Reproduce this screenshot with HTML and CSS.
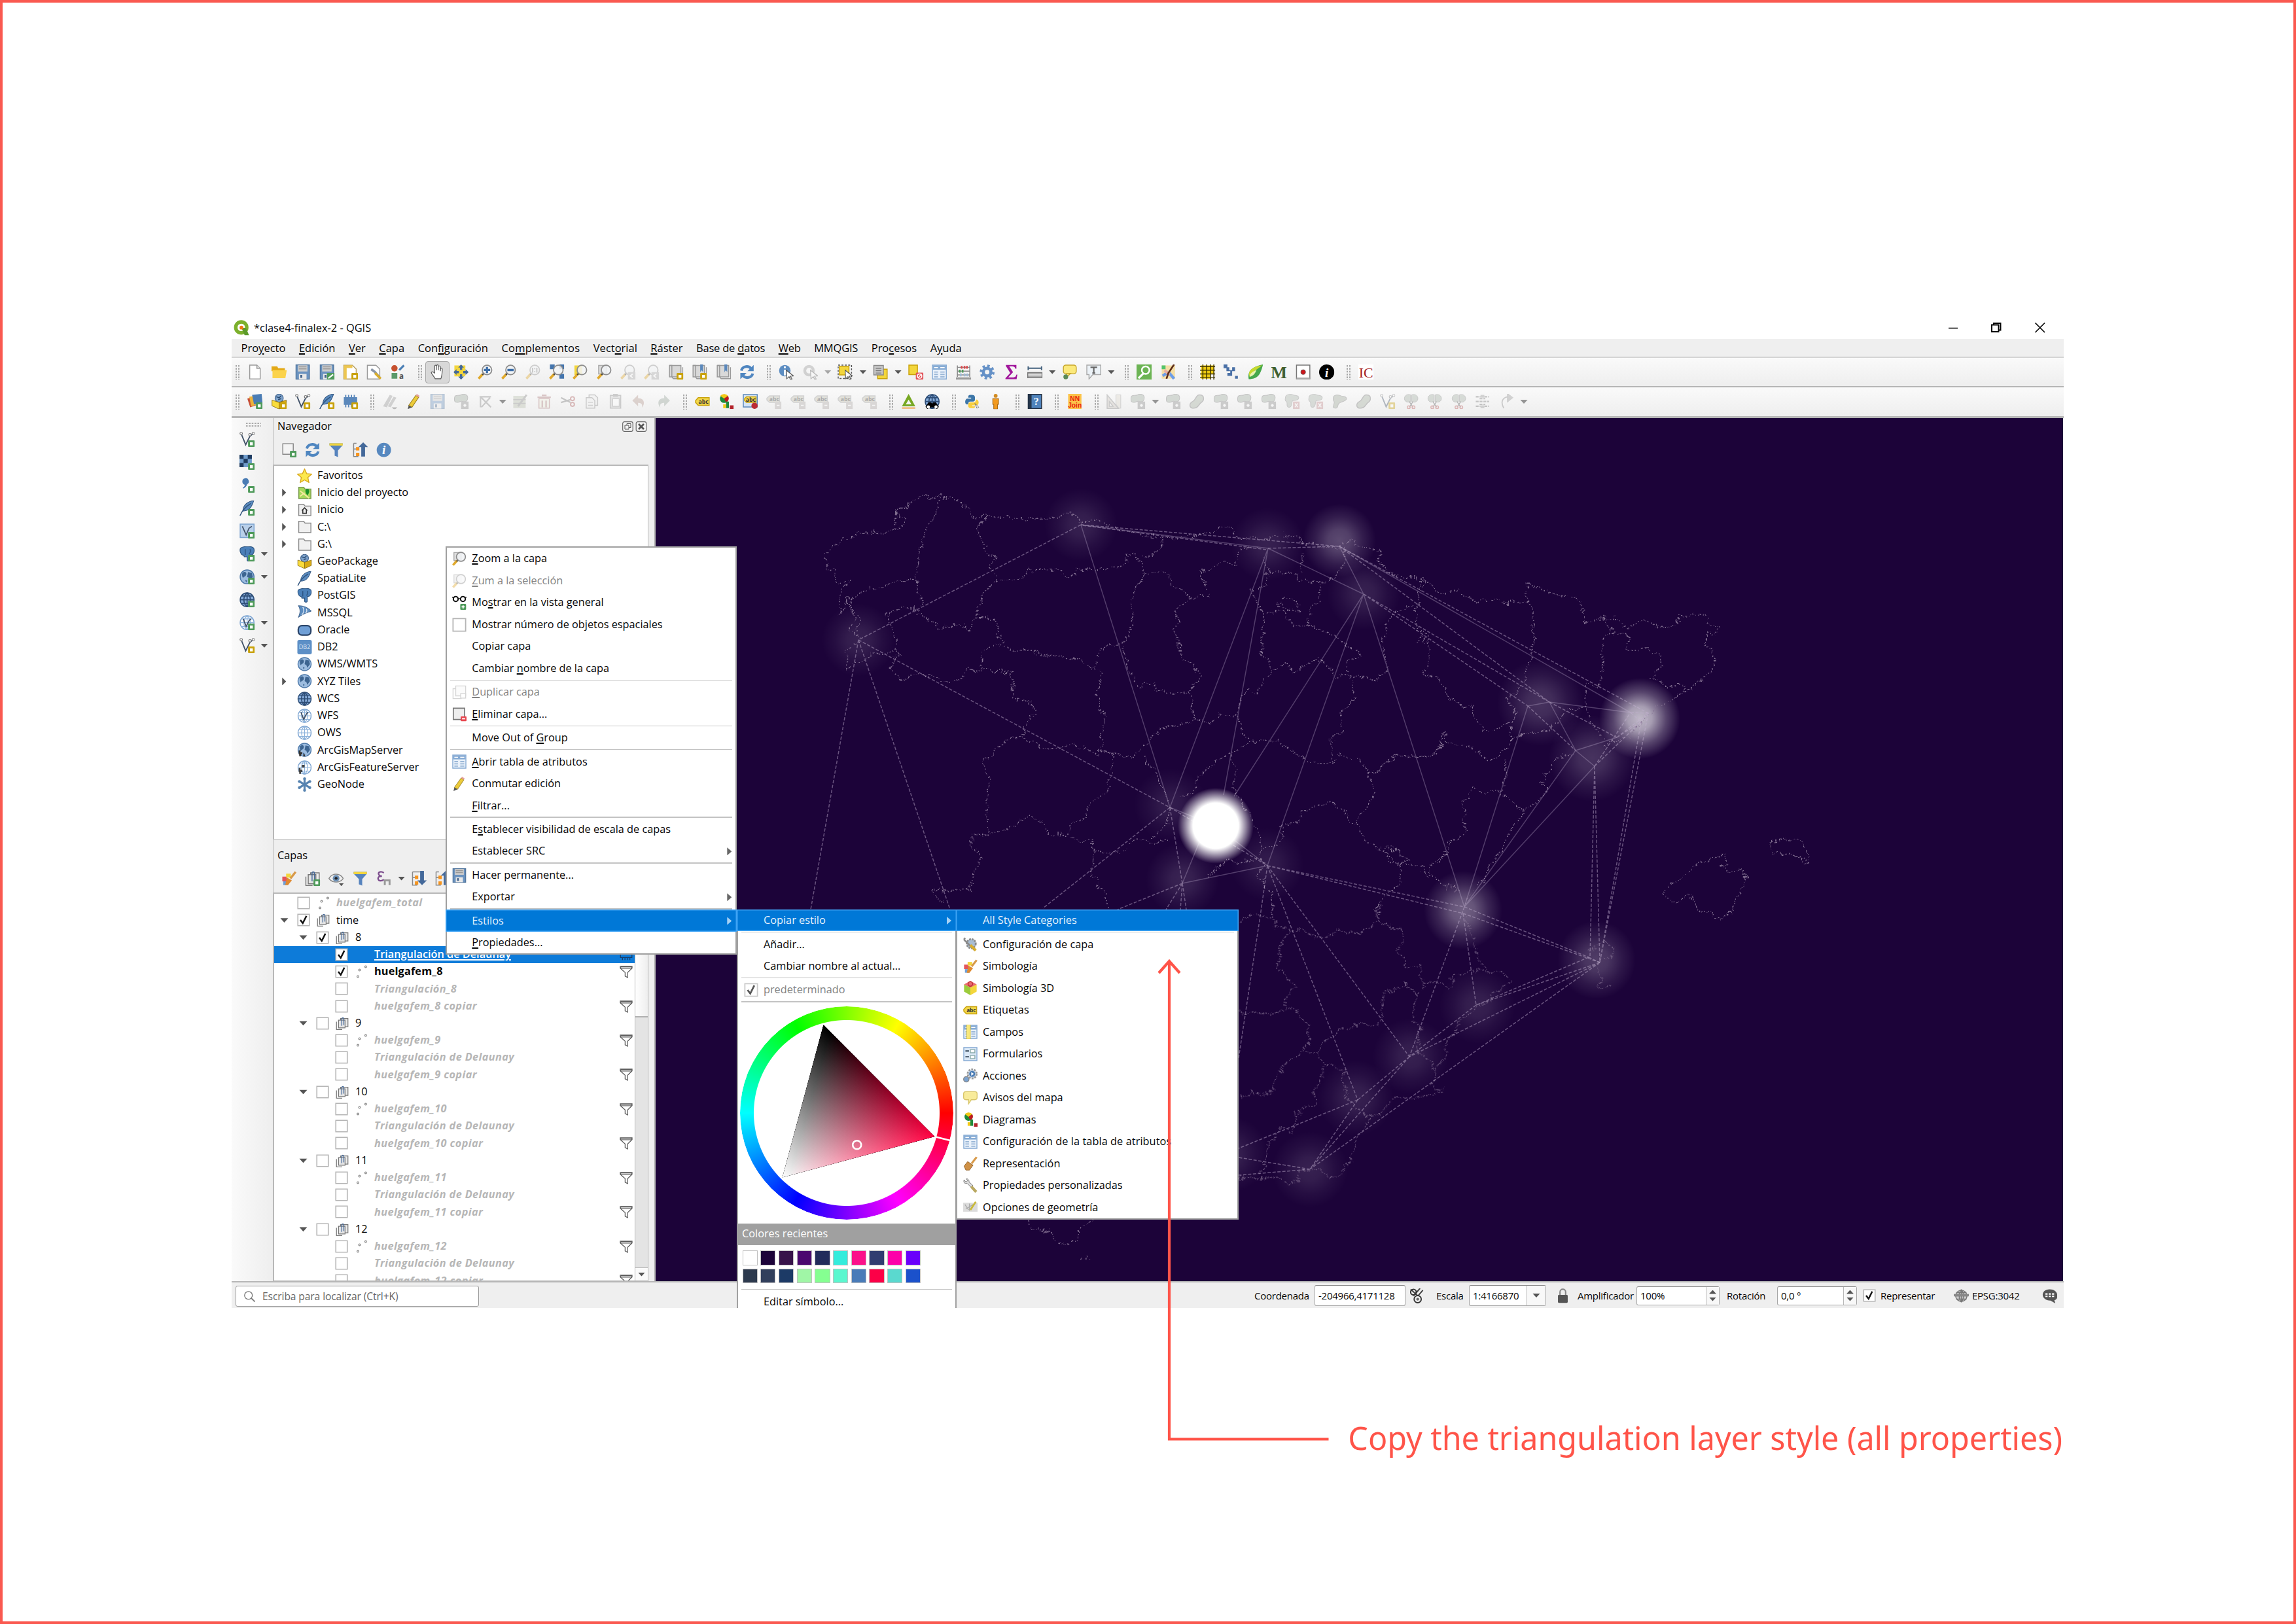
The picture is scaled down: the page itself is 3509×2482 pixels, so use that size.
FILE: index.html
```html
<!DOCTYPE html>
<html lang="es">
<head>
<meta charset="utf-8">
<title>clase4-finalex-2 - QGIS</title>
<link rel="stylesheet" href="styles.css">
</head>
<body>
<svg class="defs" aria-hidden="true">
<defs>
<symbol id="qgis" viewBox="0 0 16 16"><circle cx="7.8" cy="7.6" r="5.6" fill="none" stroke="#7cb02c" stroke-width="3.6"/><path d="M8 8l4.500 0 3.200 7.500-4.500 0z" fill="#5c9a2a"/><circle cx="8" cy="7.800" r="1.900" fill="#ee7913"/></symbol>
<symbol id="plus" viewBox="0 0 16 16"><rect x="9" y="9" width="7" height="7" rx="1" fill="#4e9a5a"/><path d="M11 11h3v3h-3z" fill="#fff"/></symbol>
<symbol id="star" viewBox="0 0 16 16"><rect x="9" y="9" width="7" height="7" rx="1" fill="#c9a20c"/><path d="M11 11h3v3h-3z" fill="#fff"/></symbol>
<symbol id="new" viewBox="0 0 16 16"><path d="M2.500.7h7.500l3.500 3.500v11h-11z" fill="#fff" stroke="#999"/><path d="M10 .7v3.500h3.500" fill="#ddd" stroke="#999"/></symbol>
<symbol id="open" viewBox="0 0 16 16"><path d="M0 2h6l1 2h7v3H0z" fill="#e3a917"/><path d="M1 6h15l-1.500 8.500H1z" fill="#fbd34c"/></symbol>
<symbol id="save" viewBox="0 0 16 16"><path d="M1 .5h14v15H1z" fill="#6b93c0" stroke="#54789f"/><path d="M3 .8h10v6.500H3z" fill="#ccc"/><path d="M4 2.500h8M4 4.700h8" stroke="#999"/><path d="M4 10h8v5.500H4z" fill="#e8e8e8"/><path d="M5.500 11h2v3h-2z" fill="#44648c"/></symbol>
<symbol id="saveas" viewBox="0 0 16 16"><use href="#save"/><path d="M8 9h8v7H8z" fill="#4e9a5a"/><path d="M9.500 14.500l5-4" stroke="#fff" stroke-width="1.500"/></symbol>
<symbol id="layout" viewBox="0 0 16 16"><path d="M1 .8h9l4 4v10.500H1z" fill="#fff" stroke="#b8a060"/><path d="M1 .8h3v14.500H1zM4 .8h6v3H4z" fill="#ecc651"/><use href="#star"/></symbol>
<symbol id="layouts" viewBox="0 0 16 16"><path d="M1 .8h9l4 4v10.500H1z" fill="#fff" stroke="#999"/><path d="M5 5l4 3 5 6" fill="none" stroke="#8a96a8" stroke-width="2.500"/><path d="M9 9l6 6" stroke="#d9ae2e" stroke-width="2.500"/></symbol>
<symbol id="stylemgr" viewBox="0 0 16 16"><circle cx="4" cy="4" r="3.300" fill="#c6512f"/><path d="M1 9h6v6H1z" fill="#5c9a6b"/><path d="M9 6l5-5" stroke="#4b7fb5" stroke-width="2.200"/><text x="9" y="15" class="t-a">a</text></symbol>
<symbol id="hand" viewBox="0 0 16 16"><path d="M5.500 15C4 12 1.500 9.500 1.500 8.500S3.500 7.500 5 9V2c0-1.600 2-1.600 2 0v4-4.500c0-1.500 2-1.300 2 0V6 2.500c0-1.300 2-1.300 2 0V7l.2-2.500c.3-1 1.800-.8 1.800.5 0 4 0 6-1.500 10z" fill="#fff" stroke="#555" stroke-width=".8"/></symbol>
<symbol id="pan" viewBox="0 0 16 16"><path d="M1 1h11.500v11.500H1z" fill="#f3d63c"/><path d="M8 0l3 3.300H9.200v2.400H6.800V3.300H5zM8 16l3-3.300H9.200v-2.400H6.800v2.400H5zM0 8l3.300-3v1.800h2.400v2.400H3.300V11zM16 8l-3.300-3v1.800h-2.400v2.400h2.400V11z" fill="#44699a"/></symbol>
<symbol id="lens" viewBox="0 0 16 16"><path d="M1 15l4.500-5" stroke="#e0a92c" stroke-width="2.600"/><path d="M5 11l2-2.500" stroke="#444" stroke-width="1.600"/><circle cx="9.800" cy="5.800" r="5" fill="#f1f3f6" fill-opacity=".85" stroke="#8c8c8c" stroke-width="1.200"/></symbol>
<symbol id="zin" viewBox="0 0 16 16"><use href="#lens"/><path d="M9.800 2.500v6.600M6.500 5.800h6.600" stroke="#3d6ea8" stroke-width="2.200"/></symbol>
<symbol id="zout" viewBox="0 0 16 16"><use href="#lens"/><path d="M6.500 5.800h6.600" stroke="#3d6ea8" stroke-width="2.400"/></symbol>
<symbol id="zone" viewBox="0 0 16 16"><use href="#lens"/><path d="M7.500 3.500v5M12 3.500v5M9.800 4v1M9.800 7v1" stroke="#777" stroke-width="1.200"/></symbol>
<symbol id="zfull" viewBox="0 0 16 16"><path d="M1 0h5v5H1zM11 0h5v5h-5zM11 10h5v5h-5z" fill="#4475ad"/><use href="#lens"/></symbol>
<symbol id="zsel" viewBox="0 0 16 16"><path d="M2 1h8v10H2z" fill="#f3d63c"/><use href="#lens"/></symbol>
<symbol id="zlay" viewBox="0 0 16 16"><path d="M2 1h8v9H2z" fill="#ddd" stroke="#aaa"/><use href="#lens"/></symbol>
<symbol id="zhist" viewBox="0 0 16 16"><use href="#lens"/><path d="M8 8h8v8H8z" fill="#aaa"/><path d="M13 10l-2.500 2 2.500 2" fill="none" stroke="#fff" stroke-width="1.300"/></symbol>
<symbol id="book" viewBox="0 0 16 16"><path d="M1.500 1h12v12h-12z" fill="#d9d9d9" stroke="#999"/><path d="M1.500 1h2.500v12l1.500 2h10V3" fill="none" stroke="#999"/></symbol>
<symbol id="bookn" viewBox="0 0 16 16"><use href="#book"/><use href="#star"/></symbol>
<symbol id="bookb" viewBox="0 0 16 16"><use href="#book"/><path d="M9 0h3v8l-1.500-2L9 8z" fill="#5b88bb"/></symbol>
<symbol id="bookbn" viewBox="0 0 16 16"><use href="#bookb"/><use href="#star"/></symbol>
<symbol id="refresh" viewBox="0 0 16 16"><path d="M2 6.500C3 2 9 .8 12 4M14 9.500C13 14 7 15.200 4 12" fill="none" stroke="#4f86c0" stroke-width="2.800"/><path d="M15 .5v6.500H8.500zM1 15.500V9h6.500z" fill="#4f86c0"/></symbol>
<symbol id="cursor" viewBox="0 0 16 16"><path d="M8 6l7.500 6-3.300.3 1.800 3-1.400.6-1.700-3L8.500 15z" fill="#fff" stroke="#555" stroke-width=".8"/></symbol>
<symbol id="ident" viewBox="0 0 16 16"><circle cx="6.500" cy="6.500" r="6" fill="#5c8dc2"/><path d="M6.500 2v2M6.500 5.500v6" stroke="#fff" stroke-width="2"/><use href="#cursor"/></symbol>
<symbol id="gear" viewBox="0 0 16 16"><circle cx="8" cy="8" r="6.300" fill="none" stroke="#6591c7" stroke-width="3" stroke-dasharray="2.470 2.470"/><circle cx="8" cy="8" r="4" fill="none" stroke="#6591c7" stroke-width="3.200"/></symbol>
<symbol id="act" viewBox="0 0 16 16"><circle cx="6.500" cy="6.500" r="4.500" fill="none" stroke="#999" stroke-width="3"/><use href="#cursor"/></symbol>
<symbol id="sel" viewBox="0 0 16 16"><path d="M.7.700h14v14H.7z" fill="none" stroke="#555" stroke-dasharray="2 1.500"/><path d="M2 2h10v9H2z" fill="#f3d63c" stroke="#c9a20c"/><use href="#cursor"/></symbol>
<symbol id="selv" viewBox="0 0 16 16"><path d="M5 5h10v10H5z" fill="#f3d63c" stroke="#c9a20c"/><path d="M1 1h10v10H1z" fill="#c9c9c9" stroke="#888"/><path d="M3 4h6M3 6.500h6M3 9h6" stroke="#777"/></symbol>
<symbol id="desel" viewBox="0 0 16 16"><path d="M.7.700h9v10h-9z" fill="#f3d63c" stroke="#c9a20c"/><rect x="8" y="8.500" width="8" height="7.500" rx="1" fill="#e2555b"/><circle cx="12" cy="12.200" r="2.300" fill="none" stroke="#fff"/><path d="M10.500 14l3-3.500" stroke="#fff"/></symbol>
<symbol id="table" viewBox="0 0 16 16"><path d="M.7.700h14.600v14.600H.7z" fill="#e9f1fa" stroke="#86abd4"/><path d="M1 1h14v4.500H1z" fill="#86abd4"/><path d="M2.500 3.200h4M9 3.200h4.500M2.500 8h4M9 8h4.500M2.500 10.500h4M9 10.500h4.500M2.500 13h4M9 13h4.500" stroke="#9ab6d6" stroke-width="1.300"/><path d="M2.500 3.200h4M9 3.200h4.500" stroke="#fff"/></symbol>
<symbol id="abacus" viewBox="0 0 16 16"><path d="M1.500 1v12M14.500 1v12M1 3h14M1 7h14M1 11h14" stroke="#888" fill="none"/><path d="M0 13.500h16V16H0z" fill="#999"/><path d="M6 1.500v3M9 1.500v3M11.500 1.500v3" stroke="#d8474a" stroke-width="1.800"/><path d="M4 5.500v3M7 5.500v3" stroke="#4e9a5a" stroke-width="1.800"/><path d="M5 9.500v3M9 9.500v3M12 9.500v3" stroke="#9fb9d6" stroke-width="1.800"/></symbol>
<symbol id="sigma" viewBox="0 0 16 16"><path d="M3 .5h11v4h-1.200c-.4-2-1.300-2.500-3-2.500H6.500L10.500 8l-5 5.500H11c1.800 0 2.400-.8 3-2.800h1l-.8 4.800H2.500v-1L7.500 9 3 1.800z" fill="#a2189c"/></symbol>
<symbol id="measure" viewBox="0 0 16 16"><path d="M1 4h14M1 2v4M15 2v4" stroke="#46637f" stroke-width="1.400"/><path d="M.5 8.500h15V14H.5z" fill="#aaa" stroke="#777"/><path d="M1 11h14" stroke="#eee"/></symbol>
<symbol id="tip" viewBox="0 0 16 16"><rect x="1.500" y=".7" width="13.500" height="9" rx="2.500" fill="#fbe97b" stroke="#c7a72c"/><path d="M5 9.500l-1 5 5-5z" fill="#fbe97b" stroke="#c7a72c"/><circle cx="4" cy="13" r="2.500" fill="#5c8a58"/></symbol>
<symbol id="note" viewBox="0 0 16 16"><path d="M.7.700h14.600v10H7l-4 4.500V10.700H.7z" fill="#ecf2f7" stroke="#aaa"/><path d="M4.500 3h7M8 3v6M6.500 9h3" stroke="#666" stroke-width="1.500"/></symbol>
<symbol id="gsearch" viewBox="0 0 16 16"><path d="M0 0h16v16H0z" fill="#6cb454"/><circle cx="9.500" cy="6" r="4" fill="none" stroke="#fff" stroke-width="1.700"/><path d="M2 14.500L7 9.500" stroke="#fff" stroke-width="2.200"/></symbol>
<symbol id="osm" viewBox="0 0 16 16"><path d="M1 1h14v14H1z" fill="#f6dfa6"/><path d="M1 1h4v4H1z" fill="#53c46c"/><path d="M9 9l5 6M2 12l6-4" stroke="#6c9de8" stroke-width="3"/><path d="M4 6l5 5" stroke="#eab0a0" stroke-width="3"/><path d="M14 0L8 9l-2 6" stroke="#5b2b18" stroke-width="1.800" fill="none"/></symbol>
<symbol id="grid" viewBox="0 0 16 16"><path d="M1 1h14v9h-4v5H1z" fill="#eecb11"/><path d="M3 0v16M7 0v16M11 0v16M14.500 0v16M0 2h16M0 6h16M0 10h16M0 14h16" stroke="#3c3200" stroke-width="1"/></symbol>
<symbol id="ytool" viewBox="0 0 16 16"><path d="M0 0h4v3h2v3h3V3h3v4H9v5H4V9h3V7H3V4H0zM12 12h3v3h-3z" fill="#4a70a6"/></symbol>
<symbol id="leaf" viewBox="0 0 16 16"><path d="M16 0C13 12 10 15 1 15.500-1 6 6 2 16 0z" fill="#46a84c"/><path d="M15 .8C9 6 4 8 2 13-1 6 6 2 15 .8z" fill="#c8d92f"/><path d="M2 13c0-4 4-6 7-7-1 3-3 6-7 7z" fill="#e8f3b0"/></symbol>
<symbol id="mletter" viewBox="0 0 16 16"><text x="8" y="14.500" class="t-m">M</text></symbol>
<symbol id="dotbox" viewBox="0 0 16 16"><path d="M1 .7h14v14.500H1z" fill="#fff" stroke="#777"/><path d="M1 14.800h14" stroke="#aaa" stroke-width="2"/><circle cx="8" cy="8" r="2.500" fill="#d0161c" stroke="#555" stroke-width=".6"/></symbol>
<symbol id="iblack" viewBox="0 0 16 16"><circle cx="8" cy="8" r="8" fill="#000"/><text x="8" y="13" class="t-i">i</text></symbol>
<symbol id="ic" viewBox="0 0 16 16"><path d="M0 0h16v16H0z" fill="#fff"/><text x="8" y="13.500" class="t-ic">IC</text></symbol>
<symbol id="dsm" viewBox="0 0 16 16"><path d="M0 5l6-2 3 9-6 2z" fill="#c74f36"/><path d="M2 3l7-1 2 9-7 2z" fill="#edb23c"/><path d="M5 1l10-1 1 10-9 1z" fill="#4a7cb4"/><use href="#plus"/></symbol>
<symbol id="gpkg" viewBox="0 0 16 16"><circle cx="8" cy="4.500" r="4.300" fill="#7fa3cb" stroke="#40628c" stroke-width=".8"/><path d="M5 3l3 1 2-2M7 6l3-1" stroke="#27476e" fill="none"/><path d="M.5 6.500L8 9v7L.5 12.500z" fill="#f9dc3c" stroke="#8a6d10" stroke-width=".6"/><path d="M15.500 6.500L8 9v7l7.500-3.500z" fill="#d8ab14" stroke="#8a6d10" stroke-width=".6"/></symbol>
<symbol id="gpkgn" viewBox="0 0 16 16"><use href="#gpkg"/><use href="#star"/></symbol>
<symbol id="vec" viewBox="0 0 16 16"><path d="M2 2.500l4.500 11 4.500-9L14 2" fill="none" stroke="#44546a" stroke-width="1.300"/><g fill="#fff" stroke="#777" stroke-width=".8"><circle cx="1.800" cy="1.800" r="1.300"/><circle cx="11" cy="3" r="1.300"/><circle cx="14.500" cy="1.800" r="1.300"/></g></symbol>
<symbol id="vecn" viewBox="0 0 16 16"><use href="#vec"/><use href="#star"/></symbol>
<symbol id="vecp" viewBox="0 0 16 16"><use href="#vec"/><use href="#plus"/></symbol>
<symbol id="feather" viewBox="0 0 16 16"><path d="M15 0C8 1 4 5 3.500 11c6 0 9-3 11.500-11z" fill="#5b8cc0" stroke="#31547e" stroke-width=".7"/><path d="M.5 16C3 10 7 6 12 3" fill="none" stroke="#31547e" stroke-width="1.100"/></symbol>
<symbol id="feathern" viewBox="0 0 16 16"><use href="#feather"/><use href="#star"/></symbol>
<symbol id="featherp" viewBox="0 0 16 16"><use href="#feather"/><use href="#plus"/></symbol>
<symbol id="chip" viewBox="0 0 16 16"><path d="M1 3.500h14v8H1z" fill="#5b88bb"/><path d="M3 1v13M6 1v13M9 1v13M12 1v13" stroke="#5b88bb" stroke-width="1.300"/></symbol>
<symbol id="chipn" viewBox="0 0 16 16"><use href="#chip"/><use href="#star"/></symbol>
<symbol id="pencil" viewBox="0 0 16 16"><path d="M2.500 12L10 1.500l3 2L6 14z" fill="#eccb3a" stroke="#9b8120" stroke-width=".7"/><path d="M10 1.500l1-1.500 3 2-1 1.500z" fill="#e6a0a0"/><path d="M2.500 12L1.500 16 6 14z" fill="#555"/></symbol>
<symbol id="pencils" viewBox="0 0 16 16"><path d="M1 13L8 1l3 1L5 14zM6 13l6-10 3 1-6 10z" fill="#999"/><path d="M10 14h6l-3 3z" fill="#666"/></symbol>
<symbol id="blob" viewBox="0 0 16 16"><path d="M1 5c0-5 4-2.500 7-4s7-.5 7 3-2 5-5 4-3 1-6 1-3-2-3-4z" fill="#9fac9f" stroke="#777" stroke-width=".7"/></symbol>
<symbol id="bsq" viewBox="0 0 16 16"><use href="#blob"/><path d="M8 8h8v8H8z" fill="#8d8d8d"/><path d="M10.500 12h3M12 10.500v3" stroke="#fff" stroke-width="1.500"/></symbol>
<symbol id="bred" viewBox="0 0 16 16"><path d="M1 4c0-4 6-4 8-3s6 0 6 3-4 3-6 3 0 7-4 7-1-5-3-6-1-2-1-4z" fill="#aab4aa" stroke="#888" stroke-width=".7"/><path d="M9 8h7v8H9z" fill="#c58f92"/><path d="M11 10l3 4M14 10l-3 4" stroke="#fff"/></symbol>
<symbol id="breshape" viewBox="0 0 16 16"><path d="M1 5c0-5 6-4 8-3s6 0 6 3-6 3-8 5 0 5-4 5 0-5-1-7-1-1-1-3z" fill="#9fa99a" stroke="#777" stroke-width=".7"/></symbol>
<symbol id="bcurve" viewBox="0 0 16 16"><path d="M11 1c6 0 5 6 2 8s-3 6-8 6-5-5-1-7 3-7 7-7z" fill="#a5b0a0" stroke="#777"/></symbol>
<symbol id="bcut" viewBox="0 0 16 16"><path d="M7.500 1v7C3 10 .5 7 1 4s4-4 6.500-3zM8.500 1v7c4.500 2 7-1 6.500-4s-4-4-6.500-3z" fill="#a5b0a5" stroke="#777" stroke-width=".6"/><path d="M6 14l4-6M10 14L6 8" stroke="#555"/><circle cx="5.500" cy="14" r="1.500" fill="none" stroke="#b55"/><circle cx="10.500" cy="14" r="1.500" fill="none" stroke="#b55"/></symbol>
<symbol id="hlines" viewBox="0 0 16 16"><path d="M1 3h5M10 3h5M1 8h14M1 13h5M10 13h5M5 5h6M5 11h6" stroke="#777" stroke-width="1.500" stroke-dasharray="3 1"/><path d="M6 1h4v3H6zM6 12h4v3H6z" fill="#999"/></symbol>
<symbol id="rot" viewBox="0 0 16 16"><path d="M11 3C4 3 1 8 5 15M9 0l5 4-5 4z" fill="none" stroke="#888" stroke-width="1.200"/><path d="M9 0l6 4-6 4z" fill="#999"/></symbol>
<symbol id="vtool" viewBox="0 0 16 16"><path d="M2 3h12M3 3v11M3 3l11 11M13 4L4 14" stroke="#888" stroke-width="1.500" fill="none"/></symbol>
<symbol id="multi" viewBox="0 0 16 16"><path d="M1 2h13v13H1z" fill="#b9c0ae"/><path d="M1 6h13M1 10h13" stroke="#888"/><path d="M6 13l9-12" stroke="#888" stroke-width="2"/></symbol>
<symbol id="trash" viewBox="0 0 16 16"><path d="M2.500 5h11v10h-11z" fill="#eed" stroke="#a77"/><path d="M1 3.500h14M5.500 1.500h5M6 7v7M10 7v7" stroke="#a77" stroke-width="1.500"/></symbol>
<symbol id="cut" viewBox="0 0 16 16"><path d="M1 4l10 5M1 9l10-3" stroke="#777" stroke-width="1.500"/><circle cx="13" cy="5" r="2" fill="none" stroke="#a55" stroke-width="1.300"/><circle cx="13" cy="11" r="2" fill="none" stroke="#a55" stroke-width="1.300"/></symbol>
<symbol id="copy" viewBox="0 0 16 16"><path d="M5 1h6l3 3v8H5z" fill="#eee" stroke="#888"/><path d="M2 4h6l3 3v8H2z" fill="#eee" stroke="#888"/><path d="M4 9h5M4 12h5" stroke="#999"/></symbol>
<symbol id="paste" viewBox="0 0 16 16"><path d="M2.500 1.500h11v13.500h-11z" fill="#ccc" stroke="#888"/><path d="M5 5h7v8H5z" fill="#fff" stroke="#999"/><path d="M5.500 0h5v3h-5z" fill="#888"/></symbol>
<symbol id="undo" viewBox="0 0 16 16"><path d="M7 1v3.500c6 0 8 5 4 10 1-4-1-5-4-5V13L1 7z" fill="#b59a90"/></symbol>
<symbol id="redo" viewBox="0 0 16 16"><path d="M9 1v3.500c-6 0-8 5-4 10-1-4 1-5 4-5V13l6-6z" fill="#98a59b"/></symbol>
<symbol id="abc" viewBox="0 0 16 16"><path d="M3.500 4H15v8H3.500L.7 9V7z" fill="#f2d84a" stroke="#c9a20c"/><text x="9" y="10.500" class="t-abc">abc</text></symbol>
<symbol id="abcd" viewBox="0 0 16 16"><path d="M3.500 2H14v7H3.500L.7 6.500v-2z" fill="#c4c2b0" stroke="#999"/><text x="8.500" y="7.800" class="t-abc">abc</text><path d="M9 8h7v8H9z" fill="#b0aaa8"/><path d="M11 12h3" stroke="#fff"/></symbol>
<symbol id="abcp" viewBox="0 0 16 16"><path d="M.7.700h14.600v13H.7z" fill="#d4e4f5" stroke="#5b88bb"/><path d="M4 3h10v6H4L2 7V5z" fill="#f2d84a" stroke="#c9a20c"/><text x="8.500" y="8" class="t-abc">abc</text><circle cx="12.500" cy="12.500" r="3.300" fill="#bb2b33"/></symbol>
<symbol id="diag" viewBox="0 0 16 16"><circle cx="6" cy="5" r="4.500" fill="#1f8a3c"/><path d="M6 5L2 2C4-.5 8-.5 10 2z" fill="#f3c916"/><path d="M6 5l4-3c2 3 0 6-2 7z" fill="#c0181e"/><path d="M8 8h3v7H8z" fill="#1f8a3c"/><path d="M12 12h4v4h-4z" fill="#b3232a"/><path d="M5 11h3v4H5z" fill="#f3c916"/></symbol>
<symbol id="tri" viewBox="0 0 16 16"><path d="M8 0l7 13H1zM8 6l-3 5h6z" fill="#77a823" fill-rule="evenodd"/><path d="M1 14h14v1.700H1z" fill="#f0b06a"/></symbol>
<symbol id="globe" viewBox="0 0 16 16"><circle cx="8" cy="8" r="7.300" fill="#9dbde0" stroke="#4b77a8"/><path d="M3 4c3-3 5 0 4 2s-3 2-3 3-2-2-1-5zM9 3l4 1 1 4-3 4-1-3-2-1zM6 11l2 1-1 2z" fill="#3d6591"/></symbol>
<symbol id="globep" viewBox="0 0 16 16"><use href="#globe"/><use href="#plus"/></symbol>
<symbol id="gdark" viewBox="0 0 16 16"><circle cx="8" cy="8" r="7.300" fill="#88addb" stroke="#2d4d76"/><path d="M8 .7v14.600M.7 8h14.600M2 4h12M2 12h12M8 .7C3.500 4 3.500 12 8 15.300M8 .7c4.500 3.300 4.500 11.300 0 14.600" fill="none" stroke="#2d4d76" stroke-width="1.200"/></symbol>
<symbol id="gdarkp" viewBox="0 0 16 16"><use href="#gdark"/><use href="#plus"/></symbol>
<symbol id="glight" viewBox="0 0 16 16"><circle cx="8" cy="8" r="7.300" fill="#fff" stroke="#7ba3d0"/><path d="M8 .7v14.600M.7 8h14.600M2 4h12M2 12h12M8 .7C3.500 4 3.500 12 8 15.300M8 .7c4.500 3.300 4.500 11.300 0 14.600" fill="none" stroke="#8db3dc" stroke-width=".9"/></symbol>
<symbol id="gv" viewBox="0 0 16 16"><use href="#glight"/><path d="M4 4l3 8 3-6 2-2" fill="none" stroke="#44546a" stroke-width="1.300"/></symbol>
<symbol id="gvp" viewBox="0 0 16 16"><use href="#gv"/><use href="#plus"/></symbol>
<symbol id="garc" viewBox="0 0 16 16"><use href="#globe"/><path d="M1.500 8.500h2v2h2v2.500H4V15H2v-2h-.5zM6.500 13h2v2h-2z" fill="#333"/></symbol>
<symbol id="garcf" viewBox="0 0 16 16"><use href="#glight"/><path d="M1.500 8.500h2v2h2v2.500H4V15H2v-2h-.5zM5 5h3v3H5z" fill="#444"/></symbol>
<symbol id="metas" viewBox="0 0 16 16"><use href="#gdark"/><path d="M4 9h3l1 1.500L9 9h3l3 4.500-2 2.500-4-2H7l-4 2-2-2.500z" fill="#000"/><circle cx="4" cy="13.800" r="1.700" fill="#fff"/><circle cx="12" cy="13.800" r="1.700" fill="#fff"/></symbol>
<symbol id="python" viewBox="0 0 16 16"><path d="M7 1c3 0 4 .5 4 3v2c0 1.500-1 2-2 2H6c-1.500 0-2 1-2 3H2C0 10 .5 5 3 5h4V4H4c0-2 0-3 3-3z" fill="#3d76a8"/><path d="M8 15c-3 0-4-.5-4-3s1-3 2-3h3c2 0 3-1 3-3h1c3 1 2 6 0 6H8v1h3c0 2-1 2-3 2z" fill="#f8cf3f"/><path d="M11 10l4 4-2 1z" fill="#fff" stroke="#666" stroke-width=".6"/></symbol>
<symbol id="man" viewBox="0 0 16 16"><circle cx="8" cy="2" r="2" fill="#d38c22"/><path d="M5 5h6v6h-1v5H6v-5H5z" fill="#f29a1f" stroke="#a5650f" stroke-width=".7"/></symbol>
<symbol id="help" viewBox="0 0 16 16"><path d="M1 .5h14v15H1z" fill="#4f83bb" stroke="#222f40"/><path d="M1 .5h3.500v15H1z" fill="#26374c"/><text x="9.500" y="12" class="t-q">?</text></symbol>
<symbol id="nn" viewBox="0 0 16 16"><path d="M1 0h14v16H1z" fill="#fcc44a"/><text x="8" y="7.300" class="t-nn">NN</text><text x="8" y="14.300" class="t-nn">Join</text></symbol>
<symbol id="setsq" viewBox="0 0 16 16"><path d="M.7 1v14.300h12zM3 8v5h4z" fill="#cfc8c0" stroke="#888" fill-rule="evenodd"/><path d="M10 1h5v14h-2L10 11z" fill="#ddd8cc" stroke="#999" stroke-width=".7"/></symbol>
<symbol id="raster" viewBox="0 0 16 16"><path d="M0 0h13v13H0z" fill="#6f9ccc"/><path d="M0 0h4.300v4.300H0zM8.700 0H13v4.300H8.700zM4.300 4.300h4.400v4.400H4.300zM0 8.700h4.300V13H0z" fill="#1e3a5e"/><use href="#plus"/></symbol>
<symbol id="comma" viewBox="0 0 16 16"><path d="M3 4a3.400 3.400 0 1 1 5 3c-.5 2-2 3.500-4 4.500l-.5-1C5 9.500 5.500 8.500 5.600 7.500 4 7.300 3 6 3 4z" fill="#4a7cb4"/><use href="#plus"/></symbol>
<symbol id="virt" viewBox="0 0 16 16"><path d="M.7.700h14.600v14H.7z" fill="#b9d0ea" stroke="#7ba3d0"/><path d="M3 3l4 9 3-7 3-2" fill="none" stroke="#44546a" stroke-width="1.200"/><use href="#plus"/></symbol>
<symbol id="eleph" viewBox="0 0 16 16"><path d="M1 2c2-2 12-3 14 0 1 3 0 6-2 7h-2v5c0 2-3 2-3 0v-3H5c0-2-1-2-2-2C1 8 0 4 1 2z" fill="#4a7fb8" stroke="#2c5480" stroke-width=".8"/><path d="M6 3v6M11 3c1 2 0 4-1 5" stroke="#2c5480" fill="none"/></symbol>
<symbol id="elephp" viewBox="0 0 16 16"><use href="#eleph"/><use href="#plus"/></symbol>
<symbol id="addlay" viewBox="0 0 16 16"><path d="M1.500 1.500h11v11h-11z" fill="#f4f4f4" stroke="#888"/><use href="#plus"/></symbol>
<symbol id="funnel" viewBox="0 0 16 16"><path d="M1 1h14v2L10 8.500V15.500L6.500 14V8.500L1 3z" fill="#5683bd"/><path d="M1 1h14v2.500H1z" fill="#f3d63c"/></symbol>
<symbol id="collapse" viewBox="0 0 16 16"><path d="M1 1h3M1 1v14h5M1 7h3" stroke="#888" fill="none"/><path d="M3.500 5h3.500v3.500H3.500zM3.500 11h3.500v3.500H3.500z" fill="#f7941d"/><path d="M11 0l5 5h-3v10H9V5H6z" fill="#44699a"/></symbol>
<symbol id="expand" viewBox="0 0 16 16"><path d="M1 1h8M1 1v14h5M1 7h3" stroke="#888" fill="none"/><path d="M3.500 5h3.500v3.500H3.500zM3.500 11h3.500v3.500H3.500z" fill="#f7941d"/><path d="M11 15l5-5h-3V0H9v10H6z" fill="#44699a"/></symbol>
<symbol id="info" viewBox="0 0 16 16"><circle cx="8" cy="8" r="7.500" fill="#5788bf"/><text x="8" y="12.700" class="t-i">i</text></symbol>
<symbol id="fav" viewBox="0 0 16 16"><path d="M8 .5l2.300 5.200 5.500.6-4.200 3.700 1.200 5.500L8 12.700l-4.800 2.800 1.200-5.500L.2 6.300l5.500-.6z" fill="#fce94f" stroke="#d8a81c"/></symbol>
<symbol id="folder" viewBox="0 0 16 16"><path d="M1.500 2h5.500l1.500 2H15v10.500H1.500z" fill="#f0f0f0" stroke="#8a8a8a"/></symbol>
<symbol id="home" viewBox="0 0 16 16"><use href="#folder"/><path d="M5 9l3-3 3 3M6 8.500V12h4V8.500" fill="none" stroke="#333" stroke-width="1.200"/></symbol>
<symbol id="phome" viewBox="0 0 16 16"><path d="M1.500 2h5.500l1.500 2H15v10.500H1.500z" fill="#a6d95b" stroke="#7a9a50"/><path d="M3 6l5 4 5 4M3 12l5-4" stroke="#f5e9a0" stroke-width="1.500"/><path d="M10 4c4-1 4 4 1 7-2-3-3-6-1-7z" fill="#1a8f2a"/></symbol>
<symbol id="mssql" viewBox="0 0 16 16"><path d="M1 .5c6 0 11 2 14.500 6C12 8 7 9 1 13.500 3 9 4 5 1 .5z" fill="#5b8cc0" stroke="#31547e" stroke-width=".6"/><path d="M6 2c2 3 1 6-1 9M10 4c1 2 0 4-1 5" stroke="#dfe9f5" fill="none"/></symbol>
<symbol id="oracle" viewBox="0 0 16 16"><rect x="1" y="3" width="14" height="10.500" rx="4" fill="#6f9fd6" stroke="#2b456a" stroke-width="1.600"/></symbol>
<symbol id="db2" viewBox="0 0 16 16"><rect width="16" height="16" rx="2" fill="#5d8fc6"/><text x="8" y="10" class="t-db">DB2</text></symbol>
<symbol id="gnode" viewBox="0 0 16 16"><path d="M8 1v14M2 4.500l12 7M14 4.500l-12 7" stroke="#5683b0" stroke-width="2.300"/><g fill="#5683b0"><circle cx="8" cy="1.600" r="1.600"/><circle cx="8" cy="14.400" r="1.600"/><circle cx="2.200" cy="4.600" r="1.600"/><circle cx="13.800" cy="11.400" r="1.600"/><circle cx="13.800" cy="4.600" r="1.600"/><circle cx="2.200" cy="11.400" r="1.600"/></g></symbol>
<symbol id="brush" viewBox="0 0 16 16"><path d="M9.500 8L15 1" stroke="#d89a4a" stroke-width="2.300"/><path d="M5 6l6 4-4 5.500H3L1 11z" fill="#cf9146" stroke="#8b5a1f" stroke-width=".6"/></symbol>
<symbol id="sym" viewBox="0 0 16 16"><path d="M1 6h5v5H1z" fill="#e2555b"/><path d="M5 3h5v4H5z" fill="#f3d63c"/><path d="M2 11h5v4H2z" fill="#6f9fd6"/><path d="M9.500 8L15 1" stroke="#d89a4a" stroke-width="2.300"/><path d="M6 7l5 3-4 5H4z" fill="#e08a2f"/></symbol>
<symbol id="grp" viewBox="0 0 16 16"><path d="M6 2h9v10H6z" fill="#eee" stroke="#777"/><path d="M3.500 4h8v9.500h-8z" fill="#e4e4e4" stroke="#777"/><path d="M1 6v9.500h7" fill="none" stroke="#777"/><path d="M7.500 11V2.500c0-2 2.500-2 2.500 0V10" fill="none" stroke="#44699a"/></symbol>
<symbol id="grpp" viewBox="0 0 16 16"><use href="#grp"/><use href="#plus"/></symbol>
<symbol id="eye" viewBox="0 0 16 16"><path d="M.5 8C4 2 12 2 15.500 8 12 13 4 13 .5 8z" fill="#eee" stroke="#888"/><circle cx="8" cy="7.800" r="3.500" fill="#6b8fb5"/><circle cx="8" cy="7.800" r="1.500" fill="#222"/><path d="M11 13h5l-2.500 3z" fill="#555"/></symbol>
<symbol id="eps" viewBox="0 0 16 16"><path d="M8 2C5 0 2 1 2.500 3.300S5 5.500 6 5.500C4 5.500 1.500 6 2 8.500S6 11 8 9" fill="none" stroke="#7d4e8e" stroke-width="1.600"/><path d="M8 9h7v6h-2v-4h-3v4H8z" fill="#999"/></symbol>
<symbol id="pts" viewBox="0 0 16 16"><g fill="none" stroke="#8a8a8a"><circle cx="6" cy="6" r="1.100"/><circle cx="13.500" cy="2" r="1.100"/><circle cx="4" cy="14" r="1.100"/></g></symbol>
<symbol id="flt" viewBox="0 0 16 16"><path d="M.8 1.500h14.400v2.200L9.800 9v6.200L6.700 13.500V9L.8 3.700z" fill="#fff" stroke="#5a5a5a"/><path d="M1.300 2h13.400v2H1.300z" fill="#ccc" stroke="#5a5a5a" stroke-width=".8"/></symbol>
<symbol id="memo" viewBox="0 0 16 16"><path d="M1 3.500h14v8H1zM3.500 12v2.500M6.500 12v2.500M9.500 12v2.500M12.500 12v2.500" fill="none" stroke="#173e6b"/></symbol>
<symbol id="glasses" viewBox="0 0 16 16"><circle cx="4" cy="4" r="2.700" fill="none" stroke="#111" stroke-width="1.500"/><circle cx="12" cy="4" r="2.700" fill="none" stroke="#111" stroke-width="1.500"/><path d="M6.500 3.500h3M0 2h2M14 2h2" stroke="#111"/><rect x="9" y="9.500" width="6.500" height="6.500" rx="1" fill="#4e9a5a"/><path d="M10.500 12.700h3.500M12.200 11v3.500" stroke="#fff" stroke-width="1.300"/></symbol>
<symbol id="cb" viewBox="0 0 16 16"><path d="M1 1h14v14H1z" fill="#fff" stroke="#b5b5b5" stroke-width="1.300"/></symbol>
<symbol id="cbx" viewBox="0 0 16 16"><use href="#cb"/><path d="M4 8l3 4 4.500-9" fill="none" stroke="#111" stroke-width="2"/></symbol>
<symbol id="dup" viewBox="0 0 16 16"><path d="M4 1h11v11H4z" fill="#f6f6f6" stroke="#999"/><path d="M4 4H1v11h9v-3" fill="none" stroke="#999"/><rect x="9.500" y="9.500" width="5.500" height="5" fill="#fff" stroke="#999"/></symbol>
<symbol id="rem" viewBox="0 0 16 16"><path d="M1.300 1h12.500v12.500H1.300z" fill="#eee" stroke="#777" stroke-width="1.200"/><rect x="9.500" y="10" width="6.500" height="5.500" rx="1" fill="#e8464f"/><path d="M11 12.700h3.500" stroke="#fff" stroke-width="1.300"/></symbol>
<symbol id="cfg" viewBox="0 0 16 16"><circle cx="9" cy="7.500" r="5" fill="#a9bdd3" stroke="#8a8a8a" stroke-width="2" stroke-dasharray="2 1"/><path d="M1 3l3 3 9 9M1 3l1-2" fill="none" stroke="#8b8b8b" stroke-width="2"/><path d="M8 9l6 6" stroke="#d9ae2e" stroke-width="3"/></symbol>
<symbol id="cube" viewBox="0 0 16 16"><path d="M1 4l7 3v9L1 12z" fill="#9ccc3c"/><path d="M15 4L8 7v9l7-4z" fill="#f3d63c"/><path d="M8 0l7 4-7 3.500L1 4z" fill="#e96a70"/><circle cx="8" cy="3.500" r="2.500" fill="#e96a70" stroke="#b33"/></symbol>
<symbol id="fields" viewBox="0 0 16 16"><use href="#table"/><path d="M4 0h4v16H4z" fill="#f8e87a" stroke="#d8bd30" stroke-width=".6"/></symbol>
<symbol id="form" viewBox="0 0 16 16"><path d="M.7.700h14.600v14.600H.7z" fill="#dbe8f6" stroke="#86abd4"/><path d="M8 3h5v3.500H8zM8 9.500h5V13H8z" fill="#fff" stroke="#8aa"/><path d="M2.500 4.500h4M2.500 11h4" stroke="#345" stroke-width="1.400"/></symbol>
<symbol id="acc" viewBox="0 0 16 16"><circle cx="10" cy="6" r="5" fill="#c9d8ea" stroke="#999" stroke-width="2" stroke-dasharray="2 1.200"/><circle cx="10" cy="6" r="3.300" fill="#4a7cb4"/><path d="M9 4l3 2-3 2z" fill="#fff"/><circle cx="3.500" cy="12" r="3" fill="#7ba3d0" stroke="#888"/></symbol>
<symbol id="bub" viewBox="0 0 16 16"><path d="M3 1h10q2.500 0 2.500 2.500v4Q15.500 10 13 10H9l-3 4.500V10H3Q.5 10 .5 7.500v-4Q.5 1 3 1z" fill="#f8eb9a" stroke="#d8c56a"/></symbol>
<symbol id="wrench" viewBox="0 0 16 16"><path d="M1 1.500C0 5 2 6 4.500 5.500L9 10l2-2-4.500-4C7 2 5 0 3.500.5L5 2.500 3 4z" fill="#ddd" stroke="#777" stroke-width=".7"/><path d="M9 9l5.500 6" stroke="#b9a860" stroke-width="3.200"/></symbol>
<symbol id="geom" viewBox="0 0 16 16"><path d="M0 3h16v10H0z" fill="#dcdcdc"/><path d="M2 5l4 6M7 4v8M3 10l8-5" stroke="#aaa"/><path d="M8 11l6-9" stroke="#c9b93a" stroke-width="2"/></symbol>
<symbol id="dirs" viewBox="0 0 16 16"><path d="M2 1l10 9M12 0L5 8M15 2L9 9" stroke="#444" stroke-width="1.400"/><circle cx="5" cy="4" r="3" fill="none" stroke="#333" stroke-width="1.400"/><circle cx="9.500" cy="11.500" r="3.800" fill="#eee" stroke="#333" stroke-width="1.300"/><circle cx="9.500" cy="11.500" r="1.500" fill="#666"/></symbol>
<symbol id="lock" viewBox="0 0 16 16"><path d="M5 7V4c0-4 6-4 6 0v3" fill="none" stroke="#888" stroke-width="1.500"/><rect x="2.800" y="7" width="10.400" height="8.500" rx="1" fill="#555"/></symbol>
<symbol id="crs" viewBox="0 0 16 16"><circle cx="8" cy="8" r="6" fill="#ccc" stroke="#777"/><path d="M8 1v14M1 8h14M2.500 4.500h11M2.500 11.500h11M8 1.500C5 4 5 12 8 14.500M8 1.500c3 2.500 3 10.500 0 13" fill="none" stroke="#777"/><path d="M0 6h16v2.500H0z" fill="#888"/></symbol>
<symbol id="msg" viewBox="0 0 16 16"><path d="M8 1c10 0 10 11 5 11.500L14 16l-5-3C-2 13-2 1 8 1z" fill="#555"/><path d="M3.500 6h2.300M7 6h2.300M10.500 6h2.300M3.500 8.500h2.300M7 8.500h2.300M10.500 8.500h2.300" stroke="#fff" stroke-width="1.400"/></symbol>
<symbol id="mag" viewBox="0 0 16 16"><circle cx="6.500" cy="6.500" r="5" fill="none" stroke="#777" stroke-width="1.100"/><path d="M10.200 10.200l4.500 4.500" stroke="#777" stroke-width="1.500"/></symbol>
<radialGradient id="glow"><stop offset="0" stop-color="#fff"/><stop offset=".3" stop-color="#fff" stop-opacity=".85"/><stop offset=".65" stop-color="#fff" stop-opacity=".36"/><stop offset="1" stop-color="#fff" stop-opacity="0"/></radialGradient>
<radialGradient id="sun"><stop offset=".6" stop-color="#fff"/><stop offset=".8" stop-color="#fff" stop-opacity=".5"/><stop offset="1" stop-color="#fff" stop-opacity="0"/></radialGradient>
<filter id="rough" x="0" y="0" width="1" height="1"><feTurbulence type="fractalNoise" baseFrequency=".07" numOctaves="3" seed="4"/><feDisplacementMap in="SourceGraphic" scale="15" xChannelSelector="R" yChannelSelector="G"/></filter>
<linearGradient id="wHue" gradientUnits="userSpaceOnUse" x1="107.500" y1="145.500" x2="297.500" y2="199"><stop offset="0" stop-color="#000"/><stop offset="1" stop-color="#ff0040"/></linearGradient>
<linearGradient id="wWhite" gradientUnits="userSpaceOnUse" x1="212" y1="113" x2="64.700" y2="261.600"><stop offset="0" stop-color="#000"/><stop offset="1" stop-color="#fff"/></linearGradient>
</defs>
</svg>

<main class="page">
<section class="window">
<header class="titlebar"><svg class="logo"><use href="#qgis"/></svg><span class="title">*clase4-finalex-2 - QGIS</span>
<svg class="winbtns" viewBox="0 0 160 20"><path d="M4 11.500h14" stroke="#000" stroke-width="1.500"/><path d="M70 6.500h10.500V17H70zM73 6.500V4h10.500v10.500h-3" fill="none" stroke="#000" stroke-width="1.900"/><path d="M136.500 3.500l14.500 14.500M151 3.500L136.500 18" stroke="#000" stroke-width="1.600"/></svg></header>
<nav class="menubar"><span>Pro<u>y</u>ecto</span><span><u>E</u>dición</span><span><u>V</u>er</span><span><u>C</u>apa</span><span>Con<u>f</u>iguración</span><span class="wide">Co<u>m</u>plementos</span><span>Vect<u>o</u>rial</span><span><u>R</u>áster</span><span class="tight">Base de <u>d</u>atos</span><span class="tight"><u>W</u>eb</span><span class="tight">MMQGIS</span><span>Pro<u>c</u>esos</span><span>A<u>y</u>uda</span></nav>

<div class="toolbar">
<i class="grip first"></i><b><svg><use href="#new"/></svg></b><b><svg><use href="#open"/></svg></b><b><svg><use href="#save"/></svg></b><b><svg><use href="#saveas"/></svg></b><b><svg><use href="#layout"/></svg></b><b><svg><use href="#layouts"/></svg></b><b><svg><use href="#stylemgr"/></svg></b>
<i class="grip"></i><b class="pressed"><svg><use href="#hand"/></svg></b><b><svg><use href="#pan"/></svg></b><b><svg><use href="#zin"/></svg></b><b><svg><use href="#zout"/></svg></b><b class="off"><svg><use href="#zone"/></svg></b><b><svg><use href="#zfull"/></svg></b><b><svg><use href="#zsel"/></svg></b><b><svg><use href="#zlay"/></svg></b><b class="off"><svg><use href="#zhist"/></svg></b><b class="off"><svg><use href="#zhist"/></svg></b><b><svg><use href="#bookn"/></svg></b><b><svg><use href="#bookbn"/></svg></b><b><svg><use href="#bookb"/></svg></b><b><svg><use href="#refresh"/></svg></b>
<i class="grip"></i><b><svg><use href="#ident"/></svg></b><b class="off"><svg><use href="#act"/></svg></b><i class="dd off"></i><b><svg><use href="#sel"/></svg></b><i class="dd"></i><b><svg><use href="#selv"/></svg></b><i class="dd"></i><b><svg><use href="#desel"/></svg></b><b><svg><use href="#table"/></svg></b><b><svg><use href="#abacus"/></svg></b><b><svg><use href="#gear"/></svg></b><b><svg><use href="#sigma"/></svg></b><b><svg><use href="#measure"/></svg></b><i class="dd"></i><b><svg><use href="#tip"/></svg></b><b><svg><use href="#note"/></svg></b><i class="dd"></i>
<i class="grip"></i><b><svg><use href="#gsearch"/></svg></b><b><svg><use href="#osm"/></svg></b>
<i class="grip"></i><b><svg><use href="#grid"/></svg></b><b><svg><use href="#ytool"/></svg></b><b><svg><use href="#leaf"/></svg></b><b><svg><use href="#mletter"/></svg></b><b><svg><use href="#dotbox"/></svg></b><b><svg><use href="#iblack"/></svg></b>
<i class="grip"></i><b><svg><use href="#ic"/></svg></b>
</div>
<div class="toolbar second">
<i class="grip first"></i><b><svg><use href="#dsm"/></svg></b><b><svg><use href="#gpkgn"/></svg></b><b><svg><use href="#vecn"/></svg></b><b><svg><use href="#feathern"/></svg></b><b><svg><use href="#chipn"/></svg></b>
<i class="grip"></i><b class="off"><svg><use href="#pencils"/></svg></b><b><svg><use href="#pencil"/></svg></b><b class="off"><svg><use href="#save"/></svg></b><b class="off"><svg><use href="#bsq"/></svg></b><b class="off"><svg><use href="#vtool"/></svg></b><i class="dd mid"></i><b class="off"><svg><use href="#multi"/></svg></b><b class="off"><svg><use href="#trash"/></svg></b><b class="off"><svg><use href="#cut"/></svg></b><b class="off"><svg><use href="#copy"/></svg></b><b class="off"><svg><use href="#paste"/></svg></b><b class="off"><svg><use href="#undo"/></svg></b><b class="off"><svg><use href="#redo"/></svg></b>
<i class="grip"></i><b><svg><use href="#abc"/></svg></b><b><svg><use href="#diag"/></svg></b><b><svg><use href="#abcp"/></svg></b><b class="off"><svg><use href="#abcd"/></svg></b><b class="off"><svg><use href="#abcd"/></svg></b><b class="off"><svg><use href="#abcd"/></svg></b><b class="off"><svg><use href="#abcd"/></svg></b><b class="off"><svg><use href="#abcd"/></svg></b>
<i class="grip"></i><b><svg><use href="#tri"/></svg></b><b><svg><use href="#metas"/></svg></b>
<i class="grip"></i><b><svg><use href="#python"/></svg></b><b><svg><use href="#man"/></svg></b>
<i class="grip"></i><b><svg><use href="#help"/></svg></b>
<i class="grip"></i><b><svg><use href="#nn"/></svg></b>
<i class="grip"></i><b class="off"><svg><use href="#setsq"/></svg></b><b class="off"><svg><use href="#bsq"/></svg></b><i class="dd mid"></i><b class="off"><svg><use href="#bsq"/></svg></b><b class="off"><svg><use href="#bcurve"/></svg></b><b class="off"><svg><use href="#bsq"/></svg></b><b class="off"><svg><use href="#bsq"/></svg></b><b class="off"><svg><use href="#bsq"/></svg></b><b class="off"><svg><use href="#bred"/></svg></b><b class="off"><svg><use href="#bred"/></svg></b><b class="off"><svg><use href="#breshape"/></svg></b><b class="off"><svg><use href="#bcurve"/></svg></b><b class="off"><svg><use href="#vecn"/></svg></b><b class="off"><svg><use href="#bcut"/></svg></b><b class="off"><svg><use href="#bcut"/></svg></b><b class="off"><svg><use href="#bcut"/></svg></b><b class="off"><svg><use href="#hlines"/></svg></b><b class="off"><svg><use href="#rot"/></svg></b><i class="dd mid"></i>
</div>

<div class="workspace">
<aside class="sidebar"><i class="hgrip"></i><b><svg><use href="#vecp"/></svg></b><b><svg><use href="#raster"/></svg></b><b><svg><use href="#comma"/></svg></b><b><svg><use href="#featherp"/></svg></b><b><svg><use href="#virt"/></svg></b><b><svg><use href="#elephp"/></svg><i class="dd"></i></b><b><svg><use href="#globep"/></svg><i class="dd"></i></b><b><svg><use href="#gdarkp"/></svg></b><b><svg><use href="#gvp"/></svg><i class="dd"></i></b><b><svg><use href="#vecn"/></svg><i class="dd"></i></b></aside>

<div class="docks">
<section class="dock browser">
<h2>Navegador<svg class="dockbtns" viewBox="0 0 38 16"><g fill="#f4f4f4" stroke="#666" stroke-width="1.200"><rect x=".7" y=".7" width="15.500" height="14.600" rx="2.500"/><rect x="21.200" y=".7" width="15.500" height="14.600" rx="2.500"/></g><path d="M4 6h6v6H4zM7 6V3.500h6v6h-3" fill="none" stroke="#555"/><path d="M25 4l8 8M33 4l-8 8" stroke="#555" stroke-width="2.800"/></svg></h2>
<div class="tools"><b><svg><use href="#addlay"/></svg></b><b><svg><use href="#refresh"/></svg></b><b><svg><use href="#funnel"/></svg></b><b><svg><use href="#collapse"/></svg></b><b><svg><use href="#info"/></svg></b></div>
<ul class="tree">
<li><i></i><svg><use href="#fav"/></svg>Favoritos</li><li><i class="cl"></i><svg><use href="#phome"/></svg>Inicio del proyecto</li><li><i class="cl"></i><svg><use href="#home"/></svg>Inicio</li><li><i class="cl"></i><svg><use href="#folder"/></svg>C:\</li><li><i class="cl"></i><svg><use href="#folder"/></svg>G:\</li><li><i></i><svg><use href="#gpkg"/></svg>GeoPackage</li><li><i></i><svg><use href="#feather"/></svg>SpatiaLite</li><li><i></i><svg><use href="#eleph"/></svg>PostGIS</li><li><i></i><svg><use href="#mssql"/></svg>MSSQL</li><li><i></i><svg><use href="#oracle"/></svg>Oracle</li><li><i></i><svg><use href="#db2"/></svg>DB2</li><li><i></i><svg><use href="#globe"/></svg>WMS/WMTS</li><li><i class="cl"></i><svg><use href="#globe"/></svg>XYZ Tiles</li><li><i></i><svg><use href="#gdark"/></svg>WCS</li><li><i></i><svg><use href="#gv"/></svg>WFS</li><li><i></i><svg><use href="#glight"/></svg>OWS</li><li><i></i><svg><use href="#garc"/></svg>ArcGisMapServer</li><li><i></i><svg><use href="#garcf"/></svg>ArcGisFeatureServer</li><li><i></i><svg><use href="#gnode"/></svg>GeoNode</li>
</ul>
</section>
<section class="dock layers">
<h2>Capas</h2>
<div class="tools"><b><svg><use href="#sym"/></svg></b><b><svg><use href="#grpp"/></svg></b><b><svg><use href="#eye"/></svg></b><b><svg><use href="#funnel"/></svg></b><b><svg><use href="#eps"/></svg></b><i class="dd"></i><b><svg><use href="#expand"/></svg></b><b><svg><use href="#collapse"/></svg></b></div>
<div class="layerbox">
<ul class="tree">
<li class="dim"><i></i><svg class="c"><use href="#cb"/></svg><svg><use href="#pts"/></svg>huelgafem_total</li>
<li><i class="ex"></i><svg class="c"><use href="#cbx"/></svg><svg><use href="#grp"/></svg>time</li>
<li class="l1"><i class="ex"></i><svg class="c"><use href="#cbx"/></svg><svg><use href="#grp"/></svg>8</li>
<li class="l2 chosen"><i></i><svg class="c"><use href="#cbx"/></svg><svg></svg><u>Triangulación de Delaunay</u><svg class="f"><use href="#memo"/></svg></li>
<li class="l2 strong"><i></i><svg class="c"><use href="#cbx"/></svg><svg><use href="#pts"/></svg>huelgafem_8<svg class="f"><use href="#flt"/></svg></li>
<li class="l2 dim"><i></i><svg class="c"><use href="#cb"/></svg><svg></svg>Triangulación_8</li>
<li class="l2 dim"><i></i><svg class="c"><use href="#cb"/></svg><svg></svg>huelgafem_8 copiar<svg class="f"><use href="#flt"/></svg></li>
<li class="l1"><i class="ex"></i><svg class="c"><use href="#cb"/></svg><svg><use href="#grp"/></svg>9</li>
<li class="l2 dim"><i></i><svg class="c"><use href="#cb"/></svg><svg><use href="#pts"/></svg>huelgafem_9<svg class="f"><use href="#flt"/></svg></li>
<li class="l2 dim"><i></i><svg class="c"><use href="#cb"/></svg><svg></svg>Triangulación de Delaunay</li>
<li class="l2 dim"><i></i><svg class="c"><use href="#cb"/></svg><svg></svg>huelgafem_9 copiar<svg class="f"><use href="#flt"/></svg></li>
<li class="l1"><i class="ex"></i><svg class="c"><use href="#cb"/></svg><svg><use href="#grp"/></svg>10</li>
<li class="l2 dim"><i></i><svg class="c"><use href="#cb"/></svg><svg><use href="#pts"/></svg>huelgafem_10<svg class="f"><use href="#flt"/></svg></li>
<li class="l2 dim"><i></i><svg class="c"><use href="#cb"/></svg><svg></svg>Triangulación de Delaunay</li>
<li class="l2 dim"><i></i><svg class="c"><use href="#cb"/></svg><svg></svg>huelgafem_10 copiar<svg class="f"><use href="#flt"/></svg></li>
<li class="l1"><i class="ex"></i><svg class="c"><use href="#cb"/></svg><svg><use href="#grp"/></svg>11</li>
<li class="l2 dim"><i></i><svg class="c"><use href="#cb"/></svg><svg><use href="#pts"/></svg>huelgafem_11<svg class="f"><use href="#flt"/></svg></li>
<li class="l2 dim"><i></i><svg class="c"><use href="#cb"/></svg><svg></svg>Triangulación de Delaunay</li>
<li class="l2 dim"><i></i><svg class="c"><use href="#cb"/></svg><svg></svg>huelgafem_11 copiar<svg class="f"><use href="#flt"/></svg></li>
<li class="l1"><i class="ex"></i><svg class="c"><use href="#cb"/></svg><svg><use href="#grp"/></svg>12</li>
<li class="l2 dim"><i></i><svg class="c"><use href="#cb"/></svg><svg><use href="#pts"/></svg>huelgafem_12<svg class="f"><use href="#flt"/></svg></li>
<li class="l2 dim"><i></i><svg class="c"><use href="#cb"/></svg><svg></svg>Triangulación de Delaunay</li>
<li class="l2 dim"><i></i><svg class="c"><use href="#cb"/></svg><svg></svg>huelgafem_12 copiar<svg class="f"><use href="#flt"/></svg></li>
</ul>
<div class="scroll"><div class="thumb"></div><div class="track"></div><div class="down"><i class="dd"></i></div></div>
</div>
</section>
</div>

<svg class="map" viewBox="1002 639 2151 1319" preserveAspectRatio="none">
<g fill="url(#glow)">
<circle cx="1652" cy="802" r="56" opacity=".12"/><circle cx="1312" cy="978" r="56" opacity=".12"/><circle cx="1937" cy="832" r="56" opacity=".12"/><circle cx="2047" cy="826" r="56" opacity=".28"/><circle cx="2084" cy="907" r="56" opacity=".12"/><circle cx="1789" cy="1230" r="56" opacity=".1"/><circle cx="1807" cy="1344" r="56" opacity=".13"/><circle cx="1937" cy="1321" r="56" opacity=".1"/><circle cx="2354" cy="1074" r="66" opacity=".19"/><circle cx="2433" cy="1159" r="66" opacity=".19"/><circle cx="2506" cy="1098" r="62" opacity=".72"/><circle cx="2236" cy="1391" r="60" opacity=".38"/><circle cx="2440" cy="1467" r="60" opacity=".23"/><circle cx="2258" cy="1537" r="58" opacity=".12"/><circle cx="2156" cy="1614" r="58" opacity=".12"/><circle cx="2072" cy="1678" r="58" opacity=".12"/><circle cx="2002" cy="1787" r="58" opacity=".12"/><circle cx="1880" cy="1764" r="58" opacity=".12"/>
</g>
<g class="borders" filter="url(#rough)">
<g transform="translate(1220 720) scale(.6378 .4337)">
<path d="M65 345L62 300 80 260 130 235 140 205 150 225 215 212 235 205 232 150 260 120 300 90 310 75 320 105 342 78 350 95 385 105 400 130 415 158 450 160 520 165 620 168 650 140 675 180 735 180 770 205 870 237 930 232 990 215 1030 200 1055 235 1120 240 1165 222 1200 245 1260 270 1300 268 1325 240 1345 265 1390 280 1395 320 1400 345"/>
<path d="M65 345L85 345 92 400 125 385 97 430 100 500 130 440 125 490 150 520 140 560 145 600 115 640 115 700 150 670 175 645 235 635 228 560 214 510 245 482 288 485M235 150L260 165 240 205M120 450L135 520 120 560 150 590"/>
<path d="M342 78L328 170 300 220 290 300 280 385 295 440 288 490M130 440L160 420 215 405 240 385 280 388M288 500L340 550 390 542 405 572 430 515 440 440 475 385 462 340 475 300 455 290 440 240 425 210 450 165"/>
<path d="M475 385L540 380 550 345 590 350 615 340 650 375 670 348 710 350 770 335 800 290 815 305 840 300 870 270 868 237M430 515L470 520 485 600 440 640 440 700 510 710"/>
<path d="M485 615L540 630 600 650 675 665 700 700 715 690 718 630 785 600 800 560 800 450 830 360 815 305M830 360L880 355 920 430 940 450 980 435 975 395 965 360 1010 320 1050 325 1055 280 1100 268"/>
<path d="M940 450L910 480 905 570 915 650 940 680 965 720 940 780 880 785 835 745 820 765 790 700 780 620M240 640L225 690 240 740 290 710 340 740 385 740 410 695 440 705"/>
<path d="M510 710L515 800 550 810 570 840 530 935 490 950 470 1000 442 1020 457 1080 450 1150 455 1280M530 935L600 985 660 960 720 1000 725 960 735 870 715 790 728 720 715 690M720 985L800 1010 845 945 865 910 950 880 940 780"/>
<path d="M730 990L755 1000 750 1080 740 1130 700 1170 690 1220 655 1240 645 1280 600 1275 580 1240 558 1212 500 1260 455 1285 417 1285 415 1320 438 1360 410 1475 320 1475 350 1530M645 1280L680 1310 705 1295 710 1345 770 1345 815 1290 840 1315 890 1300M825 1010L850 1050 880 1130 890 1180 885 1240 850 1290M710 1345L700 1410 720 1460 740 1490 740 1568"/>
<path d="M950 870L990 890 1010 855 1050 860 1065 920 1090 955 1150 950 1215 1020 1285 1025 1270 950 1305 910 1300 850 1333 800 1320 720M1080 955L1035 990 960 1075 945 1130 920 1150M1035 1000L1053 1050 1040 1110 1070 1190 1095 1250 1110 1320 1110 1400 1105 1430 1135 1500 1135 1568"/>
<path d="M1050 860L1060 800 1080 770 1095 780 1140 700 1170 680 1190 710 1240 660 1275 690 1285 725 1320 720M1140 700L1110 650 1115 500 1165 495 1185 545 1230 545 1285 580 1345 650 1315 680 1320 715 1390 740 1410 700 1400 620 1410 540 1425 500 1480 465 1503 385"/>
<path d="M1225 545L1225 490 1250 460 1250 395 1200 385 1185 360 1130 355 1115 300M1115 500L1100 460 1085 420 1125 400 1120 355M1205 370L1210 280M1250 395L1285 380 1310 330 1310 270M1150 460L1165 445 1200 460 1195 490 1160 485z"/>
<path d="M1285 1025L1300 1000 1350 1030 1370 1070 1430 1000 1500 1010 1530 990 1550 930M1370 1070L1380 1150 1355 1190 1335 1250 1355 1300 1405 1345 1440 1390 1465 1370 1445 1345 1405 1330M1335 1250L1305 1195 1275 1165 1210 1200 1200 1235 1160 1250 1155 1310 1110 1330M1568 1300L1545 1370 1510 1390M975 1420L1030 1375 1110 1370M980 1425L1010 1400 1020 1380"/>
</g>
<g transform="translate(2100 760) scale(.4464 .4337)">
<path d="M20 190L25 240 50 260 150 290 180 290 225 340 290 325 350 375 410 358 450 372 525 365 540 385 548 490 538 570 515 640 490 690 455 710 485 760 465 830 480 845"/>
<path d="M525 365L523 310 590 328 640 350 690 350 710 385 720 440 780 425 850 430 865 465 900 438 940 440 980 460 1020 450 1050 418 1090 408 1135 420 1145 445 1180 455 1165 480 1135 485 1135 515 1160 550 1160 610 1130 640 1060 690 940 762 870 840 790 880"/>
<path d="M780 425L815 470 785 495 785 600 770 665 725 660 720 740 740 780 785 855M820 480L865 485 870 540 930 533 985 560 975 610 945 635 1010 668 1060 660 1060 690"/>
<path d="M720 740L660 745 635 790 610 815 480 845 435 915 455 960 440 1030 380 1045 345 1022 325 1060 295 1065 318 1120 305 1160 318 1170 290 1205 245 1215 240 1270 200 1280 185 1310 240 1375 270 1365 290 1385"/>
<path d="M155 300L155 340 140 400 150 460 185 490 185 580 165 620 215 635 245 670 250 710 330 745 370 825 400 825 460 800M150 520L160 490 175 510M0 970L40 935 80 910 130 905 150 915 220 900 230 845 245 830 250 865 280 865 340 885 390 925 430 920"/>
<path d="M435 1040L470 1070 515 1105 560 1070 605 1030 565 1005 630 920 690 900M515 1105L470 1180 420 1270 380 1340 345 1380 310 1440M25 1230L60 1230 120 1275 100 1295 50 1290 25 1230M90 1300L160 1300 175 1340 190 1320M90 1300L85 1370 40 1400 15 1440 15 1495 100 1525"/>
<path d="M990 1398L1060 1330 1120 1285 1165 1268 1200 1258 1205 1295 1185 1300 1220 1330 1250 1312 1278 1340 1265 1375 1245 1400 1225 1460 1185 1492 1165 1465 1110 1460 1095 1415 1070 1400 1035 1435zM1355 1222L1375 1212 1430 1200 1470 1220 1490 1265 1485 1288 1420 1253 1365 1255z"/>
</g>
<g transform="translate(1880 1380) scale(.4082 .3571)">
<path d="M32 90L65 55 105 45 120 65 160 65 160 0M160 65L175 105 205 100 220 120 185 190 190 240 172 275 205 300 240 365 210 405 208 450 150 480 110 475 32 468M220 118L275 115 310 150 345 145 385 140 400 105 430 130 480 130 550 80 552 20 570 10"/>
<path d="M550 80L600 105 650 118 645 170 628 210 665 275 715 265 720 370 700 385 650 345 610 380 580 375 565 440 568 500 535 530 490 505 460 535 405 540 360 590 325 645 275 632 295 600 298 550 285 500 260 490 255 455 208 450"/>
<path d="M700 385L685 510 715 530 700 600 710 640 775 715 755 775 795 800 770 820 730 830 680 835 620 835 570 890 530 915 480 990 455 1095 410 1160 380 1185 340 1140 260 1145 250 1190 215 1200 175 1175 32 1175"/>
<path d="M720 335L800 345 815 365 840 340 820 325 890 295 950 290 1020 295 1050 335 980 390 970 415 925 440 850 510 848 560 810 590 805 655 780 690 775 715M885 60L905 160 940 260 965 285"/>
<path d="M325 645L360 695 430 715 425 800 465 880 530 915M350 700L340 760 320 815 320 855 245 900 238 985 180 965 160 1010 135 1030 145 1080 120 1110 130 1135 105 1160M275 632L250 660 205 690 170 750 165 800 140 825 80 810 32 835M1350 200L1400 165 1440 190 1425 230 1385 255 1370 270 1390 330 1380 360 1430 350"/>
</g>
<path d="M1571 1864L1578 1878 1602 1884 1625 1904 1646 1896 1646 1884 1667 1866M1652 1921l6 4 8-2"/>
</g>
<g class="mesh">
<path class="solid" d="M1652 802L1788 1234M1652 802L1938 838M1938 838L1788 1234M1938 838L1870 1215M1938 838L2084 908M2047 835L2084 908M2084 908L1886 1217M2084 908L1937 1323M2084 908L2238 1386M2047 835L2492 1089M2335 1079L2368 1073 2492 1089M2335 1079L2238 1386M2368 1073L2408 1147 2238 1386M2408 1147L2437 1171 2238 1386M2408 1147L2471 1127M1858 1262L1937 1323M1788 1234L1858 1262M1807 1350L1840 1270M1807 1350L1937 1323"/>
<path d="M1652 802L1312 978M1652 802L2047 835M1655 803L1935 840M1312 978L1788 1234M1312 978L1239 1390M1312 978L1452 1390M1938 838L2047 835M2047 835L2519 1090M2047 835L2368 1073M2084 908L2368 1073M2084 908L2335 1079M1788 1234L1594 1388M1788 1234L1807 1350M1807 1350L1708 1390M1807 1350L1782 1390M1807 1350L1813 1390M1807 1350L1804 1390M1788 1234L1937 1323"/>
<path d="M1937 1323L1926 1400 1893 1617M1937 1323L2075 1681M1937 1323L2154 1615M1937 1323L2238 1386M1937 1323L2236 1396M2238 1386L2428 1463M2236 1396L2445 1471M2238 1386L2154 1615M2236 1396L2256 1536M2335 1079L2408 1147M2368 1073L2471 1127M2437 1171L2492 1089M2437 1171L2508 1103M2471 1127L2508 1103M2471 1127L2519 1090M2492 1089L2519 1090 2508 1103 2492 1089M2437 1171L2430 1463M2437 1171L2445 1471M2508 1103L2445 1471M2519 1090L2445 1471"/>
<path d="M2428 1463L2445 1471M2428 1463L2256 1536M2445 1471L2256 1536M2445 1471L2154 1615M2256 1536L2154 1615M2445 1471L2002 1787M2154 1615L2075 1681M2154 1615L2002 1787M2075 1681L2002 1787M2075 1681L1893 1755M2002 1787L1893 1769M2002 1787L1893 1796"/>
</g>
<circle cx="1858" cy="1262" r="58" fill="url(#sun)"/>
</svg>
</div>

<footer class="status">
<div class="locator"><svg><use href="#mag"/></svg>Escriba para localizar (Ctrl+K)</div>
<div class="fields"><span>Coordenada</span><div class="box">-204966,4171128</div><svg class="st"><use href="#dirs"/></svg><span>Escala</span><div class="box">1:4166870<em><i class="dd"></i></em></div><svg class="st mid"><use href="#lock"/></svg><span>Amplificador</span><div class="box low">100%<em class="spin"><i class="up"></i><i class="dd"></i></em></div><span class="rota">Rotación</span><div class="box low">0,0 °<em class="spin"><i class="up"></i><i class="dd"></i></em></div><svg class="st chk"><use href="#cbx"/></svg><span>Representar</span><svg class="st crs"><use href="#crs"/></svg><span>EPSG:3042</span><svg class="st msg"><use href="#msg"/></svg></div>
</footer>

<div class="menu m1">
<p><svg><use href="#zlay"/></svg><span><u>Z</u>oom a la capa</span></p><p class="gray"><svg><use href="#zlay"/></svg><span><u>Z</u>um a la selección</span></p><p><svg><use href="#glasses"/></svg><span>Mo<u>s</u>trar en la vista general</span></p><p><svg><use href="#cb"/></svg><span>Mostrar número de objetos espaciales</span></p><p><span>Copiar capa</span></p><p><span>Cambiar <u>n</u>ombre de la capa</span></p><hr>
<p class="gray"><svg><use href="#dup"/></svg><span><u>D</u>uplicar capa</span></p><p><svg><use href="#rem"/></svg><span><u>E</u>liminar capa...</span></p><hr>
<p><span>Move Out of <u>G</u>roup</span></p><hr>
<p><svg><use href="#table"/></svg><span><u>A</u>brir tabla de atributos</span></p><p><svg><use href="#pencil"/></svg><span>Conmutar edición</span></p><p><span><u>F</u>iltrar...</span></p><hr>
<p><span>E<u>s</u>tablecer visibilidad de escala de capas</span></p><p><span>Establecer SRC</span><i class="sub"></i></p><hr>
<p><svg><use href="#save"/></svg><span>Hacer permanente...</span></p><p><span>Exportar</span><i class="sub"></i></p><hr>
<p class="hot"><span>Estilos</span><i class="sub"></i></p><p><span><u>P</u>ropiedades...</span></p>
</div>

<div class="menu m2">
<p class="hot"><span>Copiar estilo</span><i class="sub"></i></p><hr><p><span>Añadir...</span></p><p><span>Cambiar nombre al actual...</span></p><hr><p class="gray"><svg class="soft"><use href="#cbx"/></svg><span>predeterminado</span></p><hr>
<div class="wheel"><div class="ring"></div>
<svg class="triangle" viewBox="0 0 326 326"><path d="M127.500 28.500L297.500 199 64.700 261.600z" fill="url(#wHue)"/><path class="add" d="M127.500 28.500L297.500 199 64.700 261.600z" fill="url(#wWhite)"/><circle cx="178.700" cy="211.800" r="6.500" fill="none" stroke="#fff" stroke-width="2.600"/><path d="M299 199.500L321 205" stroke="#fff" stroke-width="2.600"/></svg></div>
<h3>Colores recientes</h3>
<div class="swatches"><i style="background:#fff"></i><i style="background:#1c0339"></i><i style="background:#38144a"></i><i style="background:#4b086f"></i><i style="background:#222c5b"></i><i style="background:#34ecdc"></i><i style="background:#fb118a"></i><i style="background:#313d70"></i><i style="background:#fd00a9"></i><i style="background:#6a00fb"></i><i style="background:#2d3a4e"></i><i style="background:#313f5c"></i><i style="background:#1c3a66"></i><i style="background:#a0f6a6"></i><i style="background:#85ff91"></i><i style="background:#5bf7cf"></i><i style="background:#497bb8"></i><i style="background:#fc0047"></i><i style="background:#5ad9cf"></i><i style="background:#1b51cb"></i></div>
<hr><p><span>Editar símbolo...</span></p>
</div>

<div class="menu m3">
<p class="hot"><span>All Style Categories</span></p><hr>
<p><svg><use href="#cfg"/></svg><span>Configuración de capa</span></p><p><svg><use href="#sym"/></svg><span>Simbología</span></p><p><svg><use href="#cube"/></svg><span>Simbología 3D</span></p><p><svg><use href="#abc"/></svg><span>Etiquetas</span></p><p><svg><use href="#fields"/></svg><span>Campos</span></p><p><svg><use href="#form"/></svg><span>Formularios</span></p><p><svg><use href="#acc"/></svg><span>Acciones</span></p><p><svg><use href="#bub"/></svg><span>Avisos del mapa</span></p><p><svg><use href="#diag"/></svg><span>Diagramas</span></p><p><svg><use href="#table"/></svg><span class="long">Configuración de la tabla de atributos</span></p><p><svg><use href="#brush"/></svg><span>Representación</span></p><p><svg><use href="#wrench"/></svg><span>Propiedades personalizadas</span></p><p><svg><use href="#geom"/></svg><span>Opciones de geometría</span></p>
</div>
</section>

<p class="caption">Copy the triangulation layer style (all properties)</p>
<svg class="arrow" viewBox="0 0 264 740"><path d="M18 3V733.500H261.500M2 21L18 3 34 21" fill="none" stroke="#ff5449" stroke-width="4.200"/></svg>
</main>
</body>
</html>
```
FILE: styles.css
```css
* { box-sizing: border-box; }
body { margin: 0; background: #fff; }
.defs { position: absolute; width: 0; height: 0; }
.page { position: relative; width: 3509px; height: 2482px; border: 4px solid #fa5950; padding: 476px 0 0 350px; overflow: hidden; }
.window { position: relative; display: flex; flex-direction: column; width: 2800px; height: 1519px; overflow: hidden; font: 16.3px/1.2 "Open Sans", "Noto Sans", sans-serif; color: #050505; white-space: nowrap; }
.window svg { display: block; flex: none; overflow: visible; }
u { text-decoration: underline; text-decoration-thickness: 1.5px; text-underline-offset: 2px; }
i { font-style: normal; }

/* Labels that are part of icon drawings */
.t-a { font: bold 8px "Open Sans", sans-serif; fill: #555; }
.t-m { font: bold 18px "Liberation Serif", serif; fill: #41602f; text-anchor: middle; }
.t-i { font: italic bold 13px "Liberation Serif", serif; fill: #fff; text-anchor: middle; }
.t-ic { font: 15px "Liberation Serif", serif; fill: #a51c22; text-anchor: middle; }
.t-abc { font: bold 6px "Open Sans", sans-serif; fill: #333; text-anchor: middle; }
.t-q { font: bold 11px "Liberation Serif", serif; fill: #fff; text-anchor: middle; }
.t-nn { font: bold 7px "Liberation Sans", sans-serif; fill: #e8200c; text-anchor: middle; }
.t-db { font: 6.5px "Open Sans", sans-serif; fill: #dbe8f6; text-anchor: middle; }

.titlebar { display: flex; align-items: center; height: 38px; padding: 3px 20px 0 3px; flex: none; }
.logo { width: 24px; height: 24px; margin-right: 7px; }
.title { font-size: 16.4px; }
.winbtns { width: 160px; height: 20px; margin-left: auto; margin-top: -2px; }

.menubar { display: flex; align-items: center; gap: 20.5px; flex: none; height: 29px; padding-left: 14.5px; background: #efefef; border-bottom: 2px solid #d4d4d4; font-size: 16.5px; }
.menubar .wide { letter-spacing: .2px; }
.menubar .tight { letter-spacing: -.2px; }

.toolbar { display: flex; align-items: center; flex: none; height: 45px; background: linear-gradient(#fafafa, #eee); border-bottom: 2px solid #b6b6b6; }
.toolbar.second { height: 47px; border-bottom-width: 3px; }
.toolbar b, .tools b { display: flex; align-items: center; justify-content: center; flex: none; width: 36.4px; height: 34px; }
.toolbar svg, .tools svg { width: 23.3px; height: 23.3px; }
.toolbar b.off svg { opacity: .38; }
.toolbar b.pressed { background: #d8d8d8; border: 1.5px solid #a8a8a8; border-radius: 4px; }
.grip { flex: none; width: 23.9px; height: 24px; background: radial-gradient(circle, #a8a8a8 1px, transparent 1.3px) 11px 0 / 4px 4.4px repeat-y, radial-gradient(circle, #a8a8a8 1px, transparent 1.3px) 15px 0 / 4px 4.4px repeat-y; }
.grip.first { width: 17.8px; background-position: 5px 0, 9px 0; }
.dd { flex: none; width: 17.3px; height: 6px; background: #555; clip-path: polygon(18% 0, 82% 0, 50% 100%); }
.dd.off { opacity: .5; }
.dd.mid { opacity: .6; }

.workspace { display: flex; flex: none; height: 1319px; }
.sidebar { width: 63px; padding: 6px 0 0 12px; background: linear-gradient(90deg, #fafafa, #eee); flex: none; }
.sidebar b { display: flex; align-items: center; height: 35.03px; }
.sidebar svg { width: 23.3px; height: 23.3px; }
.sidebar .dd { margin-left: 6px; }
.hgrip { display: block; width: 24px; height: 9px; margin-left: 9px; background: radial-gradient(circle, #a8a8a8 1px, transparent 1.3px) 0 0 / 4.4px 4px; }

.docks { width: 585px; flex: none; background: #efefef; border-left: 1.5px solid #b8b8b8; border-right: 2px solid #b0b0b0; display: flex; flex-direction: column; }
.dock { width: 573px; }
.dock h2 { display: flex; align-items: center; justify-content: space-between; margin: 0; height: 26px; padding: 0 2px 0 6px; font-size: 16.3px; font-weight: 400; }
.dockbtns { width: 38px; height: 16px; }
.tools { display: flex; align-items: center; height: 45px; padding-left: 5px; }
.browser { height: 644px; }
.browser .tree { height: 573px; }
.browser .tools { height: 45px; }
.layers { padding-top: 12px; }
.layers h2 { height: 26px; padding-top: 0; }
.layers .tools { height: 43px; }
.tree { list-style: none; margin: 0; padding: 1.5px 0 0; background: #fff; border: 1.5px solid #b8b8b8; border-top-width: 2px; }
.tree li { display: flex; align-items: center; height: 26.24px; padding-left: 4px; }
.tree li > i { flex: none; width: 23px; height: 12px; }
.tree li > svg { width: 23px; height: 22px; margin: 0 8px 0 6px; }
.browser .tree li > i { margin-right: 2px; }
.tree .cl { background: #555; clip-path: polygon(36% 0, 62% 50%, 36% 100%); }
.tree .ex { background: #555; clip-path: polygon(24% 25%, 76% 25%, 50% 80%); }
.layerbox { display: flex; height: 594px; border: 1.5px solid #b8b8b8; border-top-width: 2px; background: #fff; overflow: hidden; }
.layerbox .tree { flex: 1; border: 0; padding: 1px 0 0; position: relative; }
.layerbox .tree li > svg { margin: 0 10px 0 0; width: 20px; height: 20px; }
.layerbox .tree li > i { margin-right: 6px; }
.layerbox .tree li > svg.c { width: 20px; height: 20px; margin: 0 10px 0 2px; }
.layerbox .tree li > svg.f { width: 20px; height: 22px; margin: 0 3px 0 auto; }
.tree .l1 { padding-left: 33px; }
.tree .l2 { padding-left: 62px; }
.tree .dim { color: #b6b6b6; font-weight: 700; font-style: italic; letter-spacing: .38px; }
.tree .strong { font-weight: 700; letter-spacing: .15px; }
.tree .chosen { background: #0d7bd9; color: #fff; font-weight: 600; }
.scroll { display: flex; flex-direction: column; width: 20px; border-left: 1.5px solid #b8b8b8; }
.thumb { height: 189px; background: linear-gradient(90deg, #fff, #eee); border-bottom: 2px solid #b0b0b0; }
.track { flex: 1; background: #e4e4e4; }
.down { display: flex; align-items: center; justify-content: center; height: 20px; background: #fafafa; border-top: 1.5px solid #b8b8b8; }

.map { width: 2151px; height: 1319px; background: #1c0339; }
.window .map { overflow: hidden; }
.borders path { fill: none; stroke: #857293; stroke-width: 1.7; stroke-dasharray: 1.8 2.9; vector-effect: non-scaling-stroke; }
.mesh path { fill: none; stroke: #c5b3d2; stroke-opacity: .46; stroke-width: 1.5; stroke-dasharray: 5 2.5; }
.mesh .solid { stroke-dasharray: none; stroke-opacity: .32; }

.status { display: flex; justify-content: space-between; height: 41px; background: #efefef; border-top: 2px solid #b6b6b6; padding-left: 6px; flex: none; font-size: 15px; }
.locator { display: flex; align-items: center; width: 372px; height: 32px; margin-top: 5px; padding-left: 11px; background: #fff; border: 1.5px solid #999; border-radius: 3px; color: #666; font-size: 15.6px; letter-spacing: -.1px; }
.locator svg { width: 19px; height: 19px; margin-right: 10px; }
.fields { display: grid; grid-template-columns: 92px 139px 47px 50px 118px 48px 90px 127px 88px 122px 36px 112px 28px 107px 33px; align-items: center; letter-spacing: -.25px; padding-top: 1px; }
.fields > * { position: relative; }
.fields .box { display: flex; align-items: center; height: 32px; padding-left: 5px; background: #fff; border: 1.5px solid #a6a6a6; border-top-color: #888; border-radius: 3px; }
.fields .low { height: 29px; }
.box em { display: flex; flex-direction: column; align-items: center; justify-content: center; gap: 5px; width: 29px; height: 100%; margin-left: auto; border-left: 1.5px solid #b8b8b8; background: #f8f8f8; }
.box em.spin { width: 20px; }
.up { width: 17.3px; height: 6px; background: #555; clip-path: polygon(18% 100%, 82% 100%, 50% 0); }
.st { width: 23px; height: 23px; margin-left: 5px; }
.st.mid { margin-left: 14px; }
.st.chk { width: 20px; height: 20px; margin-left: 9px; }
.st.crs { margin-left: 0; }
.st.msg { margin-left: 0; }
.rota { padding-left: 11px; }

.menu { position: absolute; background: #fff; border: 2px solid #a0a0a0; }
.menu p { display: flex; align-items: center; position: relative; height: 33.5px; margin: 0; padding: 1px 0 0 38.5px; }
.menu p > svg { width: 22px; height: 22px; margin: 0 8px 0 -30px; }
.menu hr { height: 1.5px; margin: .7px 5px; border: 0; background: #c3c3c3; }
.menu .gray { color: #838383; }
.menu .gray > svg { opacity: .4; }
.menu .gray > svg.soft { opacity: .7; }
.menu .hot { background: #0078d7; color: #e4f1fc; margin: 0 -2px; padding-left: 40.5px; box-shadow: inset 0 0 0 1.5px #3fa4f5; }
.sub { width: 7px; height: 12px; margin: 0 6px 0 auto; background: #666; clip-path: polygon(0 0, 100% 50%, 0 100%); }
.hot .sub { background: #a8d2f5; margin-right: 8px; }
.m1 { left: 326.8px; top: 355px; width: 445.5px; }
.m2 { left: 772px; top: 909.7px; width: 336px; border-top: 0; border-bottom: 0; height: 640px; }
.m2 p { padding-left: 39px; }
.m2 .hot { padding-left: 41px; }
.m3 { left: 1107px; top: 909.7px; width: 431.5px; border-top: 0; }
.m3 .hot { padding-left: 41px; }
.m3 p { padding-left: 39px; height: 33.5px; }
.m3 .long { letter-spacing: .08px; }
.wheel { position: relative; height: 337.3px; padding: 5.3px 3px 0; }
.ring { width: 326px; height: 326px; border-radius: 50%; background: conic-gradient(#80ff00, #ff0 30deg, #f00 90deg, #f0f 150deg, #00f 210deg, #0ff 270deg, #0f0 330deg, #80ff00); -webkit-mask: radial-gradient(circle, transparent 141.5px, #000 142.5px); mask: radial-gradient(circle, transparent 141.5px, #000 142.5px); }
.window .triangle { position: absolute; left: 3px; top: 5.3px; width: 326px; height: 326px; isolation: isolate; }
.add { mix-blend-mode: plus-lighter; }
.m2 h3 { display: flex; align-items: center; height: 33px; margin: 0 -1px; padding-left: 7px; background: #a0a0a0; color: #fff; font-size: 16.3px; font-weight: 400; }
.swatches { display: grid; grid-template-columns: repeat(10, 23.3px); grid-auto-rows: 22.5px; gap: 5.2px 4.4px; padding: 8.5px 6.5px 8px; }
.swatches i { border: 1.5px solid #c0c0c0; }

.caption { position: absolute; right: 353px; top: 2158px; margin: 0; font: 48.5px/70px "Noto Sans", "Open Sans", sans-serif; color: #ff5449; white-space: nowrap; letter-spacing: -.06px; }
.arrow { position: absolute; left: 1765px; top: 1461.5px; width: 264px; height: 740px; }
```
